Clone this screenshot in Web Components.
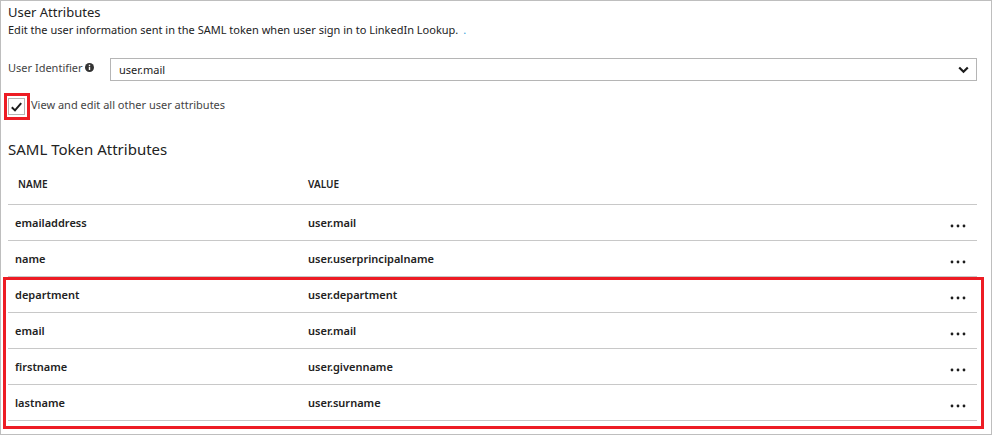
<!DOCTYPE html>
<html lang="en">
<head>
<meta charset="utf-8">
<title>User Attributes</title>
<style>
  html { height: 100%; }
  body {
    margin: 0;
    min-height: 100%;
    display: grid;
    background: #fff;
    color: #222;
    font: 11px/16px "Noto Sans", "Open Sans", sans-serif;
  }
</style>
</head>
<body>
<attributes-panel>
  <panel-header>
    <span slot="title">User Attributes</span>
    Edit the user information sent in the SAML token when user sign in to LinkedIn Lookup.
  </panel-header>
  <identifier-field value="user.mail">User Identifier</identifier-field>
  <marked-checkbox>View and edit all other user attributes</marked-checkbox>
  <token-table>SAML Token Attributes</token-table>
</attributes-panel>

<script>
class BaseElement extends HTMLElement {
  connectedCallback() {
    if (!this.shadowRoot) {
      this.attachShadow({ mode: 'open' }).innerHTML =
        '<style>*{box-sizing:border-box}</style>' + this.render();
    }
  }
}

customElements.define('attributes-panel', class extends BaseElement {
  render() {
    return `
      <style>
        :host { display: block; box-sizing: border-box; border: 1px solid #bebebe; padding: 2px 14px 13px 7px; }
      </style>
      <slot></slot>`;
  }
});

customElements.define('panel-header', class extends BaseElement {
  render() {
    return `
      <style>
        :host { display: block; margin-bottom: 20px; }
        h2 { margin: 0; font-size: 13px; font-weight: 400; line-height: 18px; }
        p { margin: 0; line-height: 17px; }
        a { color: #3aa0dc; text-decoration: none; margin-left: 2px; }
      </style>
      <h2><slot name="title"></slot></h2>
      <p><slot></slot><a href="#">.</a></p>`;
  }
});

customElements.define('identifier-field', class extends BaseElement {
  render() {
    return `
      <style>
        :host { display: flex; align-items: center; margin-bottom: 12px; }
        label { display: flex; align-items: center; flex: none; width: 102px; padding-bottom: 4px; color: #444; }
        .info { width: 9px; height: 9px; margin-left: 2px; }
        .box { flex: 1; display: grid; align-items: center; }
        select, .arrow { grid-area: 1 / 1; }
        select {
          appearance: none; width: 100%; height: 23px; margin: 0; padding: 0 30px 0 8px;
          border: 1px solid #b5b5b5; border-radius: 0; background: #fff; color: #222; font: inherit;
        }
        .arrow { justify-self: end; width: 11px; height: 8px; margin-right: 8px; pointer-events: none; }
      </style>
      <label for="identifier"><slot></slot>
        <svg class="info" viewBox="0 0 9 9" aria-hidden="true">
          <circle cx="4.5" cy="4.5" r="4.5" fill="#333"/>
          <path d="M4.5 3.7v3.4M4.5 1.7v1.2" fill="none" stroke="#fff" stroke-width="1.4"/>
        </svg>
      </label>
      <div class="box">
        <select id="identifier"><option>${this.getAttribute('value')}</option></select>
        <svg class="arrow" viewBox="0 0 11 8" aria-hidden="true">
          <path d="M1.2 1.5 5.5 5.8 9.8 1.5" fill="none" stroke="#1c1c1c" stroke-width="2.2"/>
        </svg>
      </div>`;
  }
});

customElements.define('marked-checkbox', class extends BaseElement {
  render() {
    return `
      <style>
        :host { display: flex; margin-bottom: 18px; }
        .box { display: grid; place-items: center; place-content: start; flex: none; width: 26px; height: 27px; margin-left: -4px; padding: 2px 1px; border: 3px solid #ed1c24; }
        input, svg { grid-area: 1 / 1; }
        input { appearance: none; width: 17px; height: 17px; margin: 0; border: 1px solid #b5b5b5; background: #fff; }
        svg { width: 11px; height: 10px; visibility: hidden; pointer-events: none; }
        input:checked + svg { visibility: visible; }
        label { padding: 4px 0 0 1px; color: #444; }
      </style>
      <span class="box">
        <input type="checkbox" id="all" checked>
        <svg viewBox="0 0 11 10" aria-hidden="true"><path d="M.8 5.2 4 8.4 10.2 1.2" fill="none" stroke="#1c1c1c" stroke-width="2"/></svg>
      </span>
      <label for="all"><slot></slot></label>`;
  }
});

customElements.define('token-table', class extends BaseElement {
  row([name, value]) {
    return `<tr><td>${name}</td><td>${value}</td><td>
      <button type="button" aria-label="More actions for ${name}">
        <svg viewBox="0 0 16 4" aria-hidden="true"><circle cx="2" cy="2" r="1.4"/><circle cx="8" cy="2" r="1.4"/><circle cx="14" cy="2" r="1.4"/></svg>
      </button></td></tr>`;
  }
  render() {
    const standard = [['emailaddress', 'user.mail'], ['name', 'user.userprincipalname']];
    const custom = [
      ['department', 'user.department'], ['email', 'user.mail'],
      ['firstname', 'user.givenname'], ['lastname', 'user.surname']
    ];
    return `
      <style>
        :host { display: block; }
        h3 { margin: 0 0 3px; font-size: 15px; font-weight: 400; line-height: 22px; }
        table { width: 100%; table-layout: fixed; border-collapse: separate; border-spacing: 0; }
        .name { width: 300px; }
        .menu { width: 40px; }
        th, td { padding: 0; text-align: left; border-bottom: 1px solid #c8c8c8; }
        th { height: 42px; font-size: 10px; font-weight: 600; }
        th:first-child { padding-left: 10px; }
        td { height: 36px; font-weight: 600; }
        td:first-child { padding-left: 7px; }
        button { display: grid; place-items: center; width: 20px; height: 16px; margin: 6px 0 0 11px; padding: 0; border: 0; background: none; }
        svg { width: 16px; height: 4px; fill: #1c1c1c; }
        .marked { position: relative; }
        .marked::after { content: ""; position: absolute; inset: 0 -7px -8px -5px; border: 3px solid #ed1c24; pointer-events: none; }
      </style>
      <h3><slot></slot></h3>
      <table>
        <colgroup><col class="name"><col><col class="menu"></colgroup>
        <thead><tr><th scope="col">NAME</th><th scope="col">VALUE</th><th></th></tr></thead>
        <tbody>${standard.map(this.row).join('')}</tbody>
        <tbody class="marked">${custom.map(this.row).join('')}</tbody>
      </table>`;
  }
});
</script>
</body>
</html>
